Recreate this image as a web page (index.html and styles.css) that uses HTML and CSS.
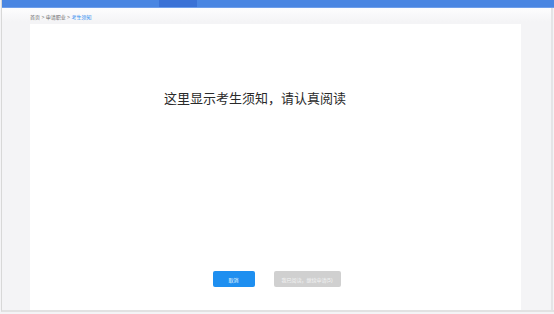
FILE: index.html
```html
<!DOCTYPE html>
<html lang="zh-CN">
<head>
    <meta charset="UTF-8">
    <title>考生须知</title>
    <link rel="stylesheet" href="styles.css">
</head>
<body>
    <div class="page">
        <div class="topbar">
            <div class="tab"></div>
            <div class="tab active"></div>
            <div class="tab rest"></div>
        </div>
        <div class="main">
            <div class="crumbs">首页 &gt; 申请职业 &gt; <span class="current">考生须知</span></div>
            <div class="card">
                <h1 class="notice">这里显示考生须知，请认真阅读</h1>
                <div class="actions">
                    <button class="btn primary">取消</button>
                    <button class="btn disabled">我已阅读，继续申请(5)</button>
                </div>
            </div>
        </div>
    </div>
</body>
</html>
```

FILE: styles.css
```css
html, body {
    margin: 0;
    padding: 0;
}
body {
    font-family: "Liberation Sans", "Noto Sans CJK SC", sans-serif;
    background: #f4f4f6;
    width: 554px;
    height: 314px;
    overflow: hidden;
}
.page {
    height: 312px;
    border-left: 1px solid #d8d8d8;
    border-bottom: 2px solid #e2e2e2;
    margin-left: 1px;
    box-sizing: border-box;
    display: flex;
    flex-direction: column;
}
.topbar {
    height: 7px;
    display: flex;
    background: #4a86e2;
    border-bottom: 1px solid #6e9eea;
}
.tab {
    width: 157px;
}
.tab.active {
    width: 38px;
    background: #3b72d6;
}
.tab.rest {
    flex: 1;
}
.main {
    flex: 1;
    display: flex;
    flex-direction: column;
    padding: 0 30px 0 28px;
    background: linear-gradient(#fdfdfe 0, #f4f4f6 14px);
    border-right: 2px solid #e4e4e6;
    margin-right: 1px;
}
.crumbs {
    height: 14px;
    line-height: 14px;
    padding-top: 2px;
    font-size: 5px;
    color: #666;
}
.crumbs .current {
    color: #2d8cf0;
}
.card {
    flex: 1;
    background: #fff;
    display: flex;
    flex-direction: column;
    align-items: center;
}
.notice {
    margin: 67px 0 0;
    font-size: 13px;
    font-weight: normal;
    color: #2a2a2a;
    line-height: 16px;
    padding-right: 41px;
}
.actions {
    margin-top: auto;
    margin-bottom: 23px;
    display: flex;
    gap: 19px;
    padding-left: 2px;
}
.btn {
    height: 16px;
    border: none;
    border-radius: 2px;
    font-family: inherit;
    font-size: 5px;
    color: #fff;
    padding: 0;
}
.btn.primary {
    width: 42px;
    background: #1e8ff0;
}
.btn.disabled {
    width: 67px;
    background: #d0d0d0;
    color: #f4f4f4;
}
```
